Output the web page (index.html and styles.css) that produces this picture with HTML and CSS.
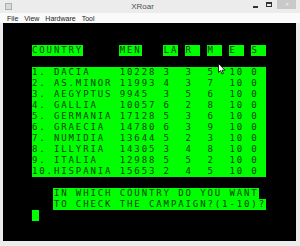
FILE: index.html
```html
<!DOCTYPE html>
<html lang="en">
<head>
    <meta charset="UTF-8">
    <title>XRoar</title>
    <link rel="stylesheet" href="styles.css">
</head>
<body>
    <div class="window">
        <div class="titlebar">
            <div class="app-icon"></div>
            <div class="title">XRoar</div>
            <div class="controls">
                <span class="btn-min"></span>
                <span class="btn-max"></span>
                <span class="btn-close">&#x2715;</span>
            </div>
        </div>
        <div class="menubar">
            <span>File</span>
            <span>View</span>
            <span>Hardware</span>
            <span>Tool</span>
        </div>
        <div class="frame">
            <div class="screen">
                <div class="vdg">
                    <div class="row"><span class="g">COUNTRY</span>     <span class="g">MEN</span>   <span class="g">LA</span> <span class="g">R </span> <span class="g">M </span> <span class="g">E </span> <span class="g">S </span></div>
                    <div class="row"></div>
                    <div class="row"><span class="g">1. DACIA    10228 3  3  5  10 0 </span></div>
                    <div class="row"><span class="g">2. AS.MINOR 11993 4  3  7  10 0 </span></div>
                    <div class="row"><span class="g">3. AEGYPTUS 9945  3  5  6  10 0 </span></div>
                    <div class="row"><span class="g">4. GALLIA   10057 6  2  8  10 0 </span></div>
                    <div class="row"><span class="g">5. GERMANIA 17128 5  3  6  10 0 </span></div>
                    <div class="row"><span class="g">6. GRAECIA  14780 6  3  9  10 0 </span></div>
                    <div class="row"><span class="g">7. NUMIDIA  13644 5  2  3  10 0 </span></div>
                    <div class="row"><span class="g">8. ILLYRIA  14305 3  4  8  10 0 </span></div>
                    <div class="row"><span class="g">9. ITALIA   12988 5  5  2  10 0 </span></div>
                    <div class="row"><span class="g">10.HISPANIA 15653 2  4  5  10 0 </span></div>
                    <div class="row"></div>
                    <div class="row">   <span class="g">IN WHICH COUNTRY DO YOU WANT</span></div>
                    <div class="row">   <span class="g">TO CHECK THE CAMPAIGN?(1-10)?</span></div>
                    <div class="row"><span class="g cursor"> </span></div>
                </div>
            </div>
        </div>
    </div>

    <svg class="pointer" width="8" height="12" viewBox="0 0 8 12">
        <path d="M0.5 0.5 L0.5 9.5 L2.6 7.6 L4 11 L5.4 10.4 L4 7.2 L7 7.2 Z" fill="#fff" stroke="#000" stroke-width="0.8"/>
    </svg>
</body>
</html>
```

FILE: styles.css
```css
body {
    margin: 0;
    padding: 0;
    width: 300px;
    height: 246px;
    overflow: hidden;
    background-color: #ececec;
    font-family: "Liberation Sans", Arial, sans-serif;
    position: relative;
}
.window {
    width: 300px;
    height: 246px;
    display: flex;
    flex-direction: column;
}
.titlebar {
    height: 13px;
    background-color: #ececec;
    display: flex;
    align-items: center;
}
.app-icon {
    width: 7px;
    height: 7px;
    margin-left: 5px;
    background-color: #d8dcd8;
    border: 1px solid #a9b1a9;
    box-sizing: border-box;
}
.title {
    flex: 1;
    text-align: center;
    font-size: 8px;
    color: #505050;
    margin-left: 20px;
}
.controls {
    display: flex;
    align-items: flex-start;
    align-self: flex-start;
    height: 13px;
    margin-right: 4px;
}
.btn-min {
    width: 5px;
    height: 2px;
    background-color: #333;
    margin-top: 6px;
    margin-right: 8px;
}
.btn-max {
    width: 6px;
    height: 5px;
    border: 1px solid #333;
    border-top-width: 2px;
    margin-top: 2px;
    margin-right: 5px;
    box-sizing: border-box;
}
.btn-close {
    width: 19px;
    height: 9px;
    background-color: #c9c9c9;
    color: #f2f2f2;
    font-size: 5px;
    line-height: 9px;
    text-align: center;
}
.menubar {
    height: 10px;
    background-color: #fafafa;
    display: flex;
    align-items: center;
    gap: 6px;
    padding-left: 7px;
    font-size: 7px;
    color: #222;
}
.frame {
    padding: 0 4px 0 3px;
}
.screen {
    width: 293px;
    height: 218px;
    background-color: #000;
    padding: 22px 0 0 29px;
    box-sizing: border-box;
}
.vdg {
    width: 234px;
    font-family: "DejaVu Sans Mono", monospace;
    font-size: 9px;
    letter-spacing: 1.894px;
    color: #0d3d0d;
}
.row {
    height: 11px;
    line-height: 11px;
    white-space: pre;
}
.g {
    display: inline-block;
    height: 11px;
    background-color: #00ff00;
    vertical-align: top;
    padding-left: 0.5px;
    margin-left: -0.5px;
}
.cursor {
    width: 7.3px;
    letter-spacing: 0;
    padding: 0;
    margin: 0;
}
.pointer {
    position: absolute;
    left: 218px;
    top: 63px;
}
```
